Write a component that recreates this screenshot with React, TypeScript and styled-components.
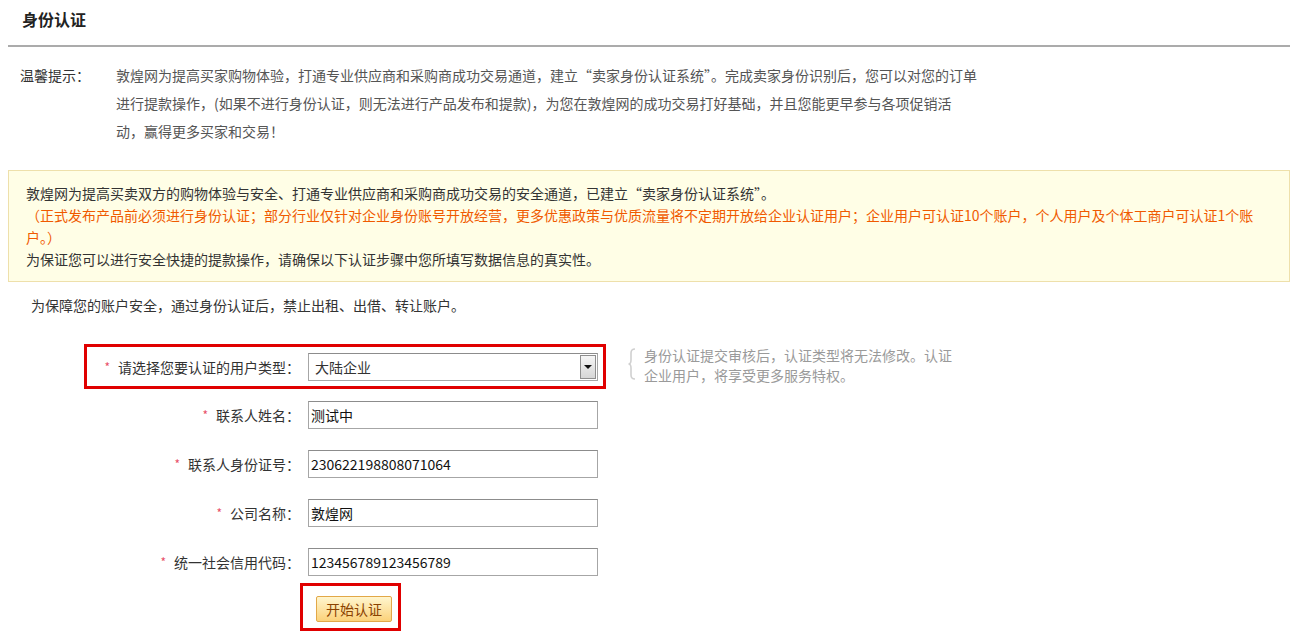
import React from "react";
import styled, { createGlobalStyle } from "styled-components";

const GlobalStyle = createGlobalStyle`
  html, body {
    margin: 0;
    padding: 0;
    background: #ffffff;
  }
  body {
    font-family: "Noto Sans CJK SC", "Liberation Sans", sans-serif;
    font-size: 14px;
    color: #333333;
  }
  * { box-sizing: border-box; }
`;

const Page = styled.div`
  width: 1282px;
  margin-left: 8px;
  display: flex;
  flex-direction: column;
`;

const Header = styled.div`
  height: 47px;
  padding: 9px 0 0 14px;
  border-bottom: 2px solid #ababab;
`;

const Title = styled.h1`
  margin: 0;
  font-size: 16px;
  line-height: 20px;
  font-weight: 700;
  color: #222222;
`;

const Tip = styled.div`
  display: grid;
  grid-template-columns: 96px 1fr;
  padding: 14px 0 0 12px;
  line-height: 28px;
`;

const TipLabel = styled.div`
  color: #333333;
`;

const TipBody = styled.div`
  color: #555555;
`;

const Line = styled.span`
  display: block;
  white-space: nowrap;
`;

const Notice = styled.div`
  margin-top: 25px;
  border: 1px solid #eee0ab;
  background: #fffee6;
  padding: 11px 17px;
  line-height: 22px;
  color: #333333;
`;

const Warn = styled.span`
  display: block;
  white-space: nowrap;
  color: #f05a00;
`;

const SecureNote = styled.p`
  margin: 12px 0 0 23px;
  line-height: 22px;
  color: #333333;
`;

const Form = styled.div`
  margin-top: 28px;
  padding-left: 76px;
  display: flex;
  flex-direction: column;
  gap: 4px;
`;

const TopRow = styled.div`
  display: flex;
  align-items: flex-start;
  margin-bottom: -1px;
`;

const Row = styled.div<{ $highlight?: boolean }>`
  display: flex;
  align-items: center;
  width: max-content;
  height: 45px;
  padding: 3px 5px 2px 0;
  border: 3px solid ${(p) => (p.$highlight ? "#e00000" : "transparent")};
`;

const Label = styled.label`
  width: 221px;
  height: 28px;
  padding-right: 8px;
  display: flex;
  align-items: center;
  justify-content: flex-end;
  white-space: nowrap;
  line-height: 28px;
  color: #333333;
`;

const Star = styled.span`
  color: #e8506a;
  font-size: 12px;
  line-height: 12px;
  margin-right: 8px;
`;

const Input = styled.input`
  width: 290px;
  height: 28px;
  border: 1px solid #a6a6a6;
  border-top-color: #8c8c8c;
  padding: 0 2px;
  margin: 0;
  font-family: "Noto Sans CJK SC", "Liberation Sans", sans-serif;
  font-size: 14px;
  color: #111111;
  background: #ffffff;
  outline: none;
`;

const Select = styled.div`
  width: 290px;
  height: 28px;
  border: 1px solid #a6a6a6;
  border-top-color: #8c8c8c;
  padding: 1px;
  display: flex;
  align-items: stretch;
  justify-content: space-between;
  background: #ffffff;
`;

const SelectValue = styled.span`
  padding-left: 5px;
  line-height: 24px;
  color: #333333;
`;

const Arrow = styled.span`
  width: 16px;
  border: 1px solid #8e8e8e;
  background: linear-gradient(#f6f6f6, #d6d6d6);
  display: flex;
  align-items: center;
  justify-content: center;
  &::after {
    content: "";
    border-left: 4px solid transparent;
    border-right: 4px solid transparent;
    border-top: 4px solid #111111;
  }
`;

const Hint = styled.div`
  margin: 1px 0 0 22px;
  display: flex;
  gap: 8px;
  color: #9a9a9a;
  line-height: 20px;
`;

const Brace = styled.svg`
  margin-top: 3px;
  flex: none;
`;

const ButtonBox = styled.div`
  margin: -5px 0 0 216px;
  width: max-content;
  border: 3px solid #e00000;
  padding: 10px 6px 6px 13px;
`;

const SubmitButton = styled.button`
  display: block;
  width: 76px;
  height: 26px;
  margin: 0;
  padding: 0;
  border: 1px solid #e2a848;
  border-radius: 2px;
  background: linear-gradient(#fff6cf, #fbd27a);
  color: #8a4200;
  font-family: "Noto Sans CJK SC", sans-serif;
  font-size: 14px;
  line-height: 24px;
  cursor: pointer;
`;

const fields = [
  { label: "联系人姓名", value: "测试中" },
  { label: "联系人身份证号", value: "230622198808071064" },
  { label: "公司名称", value: "敦煌网" },
  { label: "统一社会信用代码", value: "123456789123456789" },
];

export default function App() {
  return (
    <>
      <GlobalStyle />
      <Page>
        <Header>
          <Title>身份认证</Title>
        </Header>

        <Tip>
          <TipLabel>温馨提示：</TipLabel>
          <TipBody>
            <Line>
              敦煌网为提高买家购物体验，打通专业供应商和采购商成功交易通道，建立“卖家身份认证系统”。完成卖家身份识别后，您可以对您的订单
            </Line>
            <Line>
              进行提款操作，(如果不进行身份认证，则无法进行产品发布和提款)，为您在敦煌网的成功交易打好基础，并且您能更早参与各项促销活
            </Line>
            <Line>动，赢得更多买家和交易！</Line>
          </TipBody>
        </Tip>

        <Notice>
          <Line>
            敦煌网为提高买卖双方的购物体验与安全、打通专业供应商和采购商成功交易的安全通道，已建立“卖家身份认证系统”。
          </Line>
          <Warn>
            （正式发布产品前必须进行身份认证；部分行业仅针对企业身份账号开放经营，更多优惠政策与优质流量将不定期开放给企业认证用户；企业用户可认证10个账户，个人用户及个体工商户可认证1个账
          </Warn>
          <Warn>户。）</Warn>
          <Line>为保证您可以进行安全快捷的提款操作，请确保以下认证步骤中您所填写数据信息的真实性。</Line>
        </Notice>

        <SecureNote>为保障您的账户安全，通过身份认证后，禁止出租、出借、转让账户。</SecureNote>

        <Form>
          <TopRow>
            <Row $highlight>
              <Label>
                <Star>*</Star>请选择您要认证的用户类型：
              </Label>
              <Select>
                <SelectValue>大陆企业</SelectValue>
                <Arrow />
              </Select>
            </Row>
            <Hint>
              <Brace width="8" height="32" viewBox="0 0 8 32">
                <path
                  d="M7 1 Q3 1 3 5 L3 12 Q3 16 0.5 16 Q3 16 3 20 L3 27 Q3 31 7 31"
                  fill="none"
                  stroke="#d0d0d0"
                  strokeWidth="1.6"
                />
              </Brace>
              <div>
                <Line>身份认证提交审核后，认证类型将无法修改。认证</Line>
                <Line>企业用户，将享受更多服务特权。</Line>
              </div>
            </Hint>
          </TopRow>

          {fields.map((f) => (
            <Row key={f.label}>
              <Label>
                <Star>*</Star>
                {f.label}：
              </Label>
              <Input defaultValue={f.value} />
            </Row>
          ))}

          <ButtonBox>
            <SubmitButton type="button">开始认证</SubmitButton>
          </ButtonBox>
        </Form>
      </Page>
    </>
  );
}
